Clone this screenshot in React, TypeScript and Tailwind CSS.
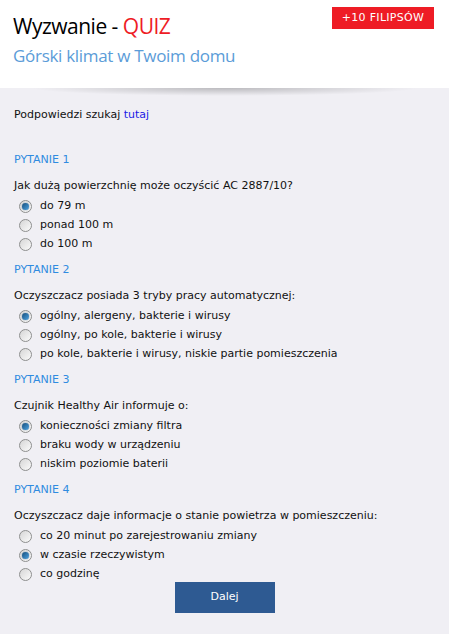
import React from 'react'

type Question = {
  title: string
  text: string
  options: string[]
  selected: number
}

const questions: Question[] = [
  {
    title: 'PYTANIE 1',
    text: 'Jak dużą powierzchnię może oczyścić AC 2887/10?',
    options: ['do 79 m', 'ponad 100 m', 'do 100 m'],
    selected: 0,
  },
  {
    title: 'PYTANIE 2',
    text: 'Oczyszczacz posiada 3 tryby pracy automatycznej:',
    options: [
      'ogólny, alergeny, bakterie i wirusy',
      'ogólny, po kole, bakterie i wirusy',
      'po kole, bakterie i wirusy, niskie partie pomieszczenia',
    ],
    selected: 0,
  },
  {
    title: 'PYTANIE 3',
    text: 'Czujnik Healthy Air informuje o:',
    options: ['konieczności zmiany filtra', 'braku wody w urządzeniu', 'niskim poziomie baterii'],
    selected: 0,
  },
  {
    title: 'PYTANIE 4',
    text: 'Oczyszczacz daje informacje o stanie powietrza w pomieszczeniu:',
    options: ['co 20 minut po zarejestrowaniu zmiany', 'w czasie rzeczywistym', 'co godzinę'],
    selected: 1,
  },
]

function Radio({ checked }: { checked: boolean }) {
  return (
    <span className="flex h-[13px] w-[13px] shrink-0 items-center justify-center rounded-full border border-[#8e8f8f] bg-gradient-to-br from-[#d6d6d6] to-[#fbfbfb]">
      {checked && (
        <span className="h-[7px] w-[7px] rounded-full bg-gradient-to-br from-[#15507f] to-[#4fa3e0] shadow-[0_0_1px_#0b3a63]" />
      )}
    </span>
  )
}

export default function App() {
  return (
    <div className="min-h-[634px] bg-[#f0eff4] text-[11px] text-[#111] [font-family:'DejaVu_Sans',Verdana,sans-serif]">
      {/* Header */}
      <div className="relative bg-white px-[13px] pt-[7px] pb-[21px]">
        <div className="flex items-start justify-between">
          <h1 className="mt-[7px] text-[21px] leading-[24px] text-black [font-family:'Open_Sans',sans-serif] tracking-[-0.5px]">
            Wyzwanie - <span className="text-[#ee1c25]">QUIZ</span>
          </h1>
          <span className="mr-[2px] flex h-[22px] w-[102px] items-center justify-center bg-[#ee1c25] text-[11px] tracking-[0.3px] text-white">
            +10 FILIPSÓW
          </span>
        </div>
        <h2 className="mt-[7px] text-[17px] leading-[22px] text-[#5b9cd8] [font-family:'Open_Sans',sans-serif] tracking-[-0.3px]">
          Górski klimat w Twoim domu
        </h2>
        <div className="pointer-events-none absolute left-[30px] right-[30px] top-full h-[8px] bg-[radial-gradient(ellipse_at_top,rgba(0,0,0,0.22),rgba(0,0,0,0)_70%)]" />
      </div>

      {/* Content */}
      <div className="px-[14px] pt-[19px]">
        <p className="leading-[16px]">
          Podpowiedzi szukaj <a className="text-[#1a1ae6]">tutaj</a>
        </p>

        <div className="mt-[29px] flex flex-col">
          {questions.map((q, qi) => (
            <div key={q.title} className={qi > 0 ? 'mt-[8px]' : ''}>
              <div className="leading-[16px] text-[#2f8be0]">{q.title}</div>
              <div className="mt-[10px] leading-[16px]">{q.text}</div>
              <div className="mt-[3px] flex flex-col">
                {q.options.map((o, oi) => (
                  <label key={o} className="flex h-[19px] items-center gap-[8px] pl-[5px]">
                    <Radio checked={oi === q.selected} />
                    <span>{o}</span>
                  </label>
                ))}
              </div>
            </div>
          ))}
        </div>

        <div className="-mt-[2px] flex justify-center">
          <button className="h-[31px] w-[100px] bg-[#2e5a92] text-[11px] text-white">Dalej</button>
        </div>
      </div>
    </div>
  )
}
